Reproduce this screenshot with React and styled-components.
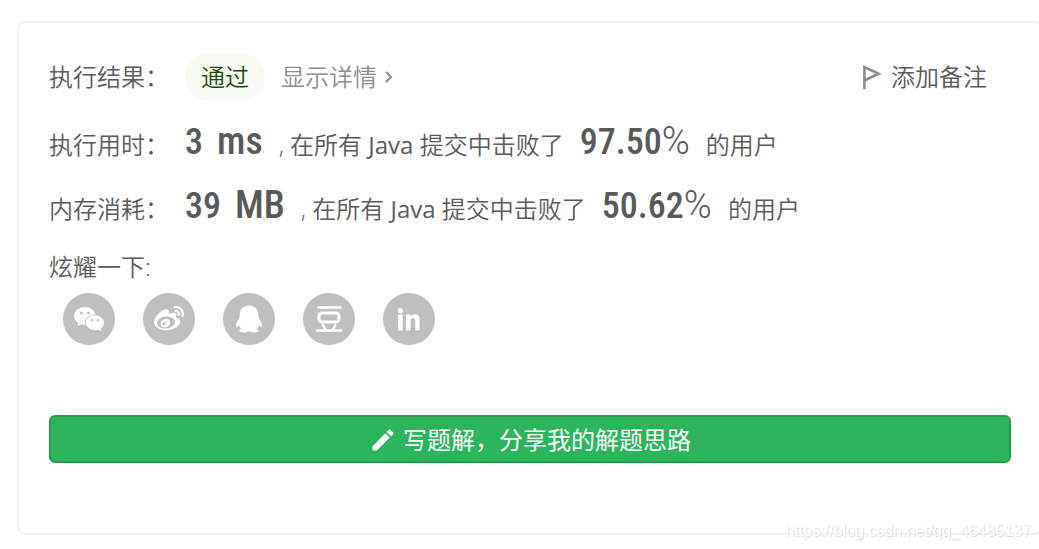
import React from 'react';
import styled, { createGlobalStyle } from 'styled-components';
import { AiFillWechat } from 'react-icons/ai';
import { FaWeibo } from 'react-icons/fa';
import { MdEdit } from 'react-icons/md';

const color = {
  text: '#595959',
  muted: '#8c8c8c',
  border: '#efefef',
  circle: '#bfbfbf',
  green: '#2db55d',
  greenBorder: '#269a4f',
  pass: '#1d4a0b',
  passBackground: '#f7fbf4',
};

const results = [
  { label: '执行用时：', amount: '3', unit: 'ms', percent: '97.50' },
  { label: '内存消耗：', amount: '39', unit: 'MB', percent: '50.62' },
];

const shares = [
  { name: '微信', icon: <AiFillWechat size={34} /> },
  { name: '微博', icon: <FaWeibo size={30} /> },
  { name: 'QQ', icon: <QqIcon /> },
  { name: '豆瓣', icon: <DoubanIcon /> },
  { name: 'LinkedIn', icon: <LinkedInIcon /> },
];

function QqIcon() {
  return (
    <svg width="28" height="28" viewBox="0 0 28 28" fill="currentColor">
      <path d="M14 .5C8.500.5 4.800 4.300 4.800 9.200c0 .8 0 1.400-.3 2.100-.3.600-.2 1.200-.2 1.900C2.300 16 1 18.500 1 20.600c0 1.200.3 1.700.7 1.700.7 0 1.600-1 2.300-2.300.4 1.600 1.200 3 2.400 4.100-1.300.4-2 1-2 1.700 0 1.200 1.900 1.700 4.300 1.700 2.300 0 4.100-.6 5.300-1.500 1.200.9 3 1.500 5.300 1.500 2.400 0 4.300-.5 4.300-1.700 0-.7-.7-1.300-2-1.700 1.200-1.100 2-2.500 2.400-4.100.7 1.300 1.600 2.300 2.300 2.300.4 0 .7-.5.700-1.700 0-2.100-1.300-4.600-3.300-7.400 0-.7.1-1.300-.2-1.900-.3-.7-.3-1.300-.3-2.100C23.200 4.300 19.500.5 14 .5z" />
    </svg>
  );
}

function DoubanIcon() {
  return (
    <svg width="28" height="28" viewBox="0 0 28 28" fill="none" stroke="currentColor" strokeLinecap="round">
      <path d="M3.500 2.500h22M2 25.500h24" strokeWidth="2.500" />
      <rect x="4" y="8" width="20" height="9" rx="3" strokeWidth="3" />
      <path d="M8 20l2.500 4.500M20.500 20L18 24.500" strokeWidth="2.500" />
    </svg>
  );
}

function LinkedInIcon() {
  return (
    <svg width="24" height="24" viewBox="0 0 24 24" fill="currentColor">
      <circle cx="3.400" cy="3.600" r="2.600" />
      <path d="M1.200 7.500h4.500v16H1.200zM9 7.500h4.300v2.200c.8-1.500 2.400-2.500 4.500-2.500 4 0 4.900 2.700 4.900 6.300v10h-4.500v-9.100c0-2.100-.4-3.400-2.200-3.400-1.900 0-2.500 1.400-2.500 3.400v9.100H9z" />
    </svg>
  );
}

function App() {
  return (
    <Page>
      <GlobalStyle />
      <Card>
        <Row>
          <Label>执行结果：</Label>
          <Status>通过</Status>
          <DetailLink href="#detail">
            显示详情
            <svg width="8" height="14" viewBox="0 0 8 14" fill="none" stroke="currentColor" strokeWidth="2">
              <path d="M1 2l5 5-5 5" />
            </svg>
          </DetailLink>
          <NoteButton type="button">
            <svg width="20" height="26" viewBox="0 0 20 26" fill="none" stroke={color.muted} strokeWidth="2.600">
              <path d="M1.400 25V3l14.200 6.800L1.400 16.500" />
            </svg>
            添加备注
          </NoteButton>
        </Row>
        <Results>
          {results.map(result => (
            <ResultRow key={result.label}>
              <Label>{result.label}</Label>
              <Value>{result.amount}<Unit>{result.unit}</Unit></Value>
              <span>, 在所有 <Language>Java</Language> 提交中击败了</span>
              <Value>{result.percent}<Percent>%</Percent></Value>
              <span>的用户</span>
            </ResultRow>
          ))}
        </Results>
        <ShareTitle>炫耀一下:</ShareTitle>
        <ShareList>
          {shares.map(share => (
            <ShareLink key={share.name} href="#share" aria-label={share.name}>
              {share.icon}
            </ShareLink>
          ))}
        </ShareList>
        <WriteButton type="button">
          <MdEdit size={28} />
          写题解，分享我的解题思路
        </WriteButton>
      </Card>
      <Watermark>https://blog.csdn.net/qq_46485137</Watermark>
    </Page>
  );
}

const GlobalStyle = createGlobalStyle`
  * {
    box-sizing: border-box;
  }
  body {
    margin: 0;
    overflow-x: hidden;
    background: white;
    color: ${color.text};
    font: 350 24px/36px "Open Sans", "Noto Sans CJK SC", sans-serif;
  }
`

const Page = styled.main`
  position: relative;
  padding: 21px 0 14px 17px;
`

const Card = styled.section`
  margin-right: -4px;
  padding: 30px;
  border: 2px solid ${color.border};
  border-radius: 8px;
`

const Row = styled.div`
  display: flex;
  align-items: center;
  gap: 16px;
  height: 48px;
  white-space: nowrap;
`

const Results = styled.div`
  padding-top: 8px;
`

const ResultRow = styled(Row)`
  align-items: baseline;
  height: 64px;
  line-height: 64px;
`

const Label = styled.span`
  width: 120px;
`

const Status = styled.strong`
  padding: 0 16px;
  border-radius: 24px;
  background: ${color.passBackground};
  color: ${color.pass};
  font-weight: 350;
  line-height: 48px;
`

const DetailLink = styled.a`
  display: flex;
  align-items: center;
  gap: 8px;
  color: ${color.muted};
  text-decoration: none;
`

const NoteButton = styled.button`
  display: flex;
  align-items: center;
  gap: 8px;
  margin-left: auto;
  padding: 0 24px;
  border: 0;
  background: none;
  color: inherit;
  font: inherit;
  cursor: pointer;
`

const Value = styled.strong`
  font-family: "Roboto Condensed", Roboto, sans-serif;
  font-size: 36px;
  font-weight: 500;
`

const Unit = styled.span`
  margin-left: 14px;
  font-size: 38px;
`

const Language = styled.span`
  font-weight: 400;
`

const Percent = styled.span`
  font-family: Roboto, sans-serif;
  font-size: 38px;
  font-weight: 300;
`

const ShareTitle = styled.div`
  margin-top: 12px;
`

const ShareList = styled.div`
  display: flex;
  gap: 28px;
  padding: 8px 14px 0;
`

const ShareLink = styled.a`
  display: flex;
  align-items: center;
  justify-content: center;
  width: 52px;
  height: 52px;
  border-radius: 50%;
  background: ${color.circle};
  color: white;
`

const WriteButton = styled.button`
  display: flex;
  align-items: center;
  justify-content: center;
  gap: 6px;
  width: 100%;
  height: 48px;
  margin: 70px 0 40px;
  padding: 2px 0 0;
  border: 2px solid ${color.greenBorder};
  border-radius: 6px;
  background: ${color.green};
  color: white;
  font: inherit;
  font-weight: 400;
  cursor: pointer;
`

const Watermark = styled.div`
  position: absolute;
  right: 8px;
  bottom: 8px;
  color: white;
  font: 16px/20px "Liberation Sans", Arial, sans-serif;
  text-shadow: 1px 1px 1px #d8d8d8;
`

export default App;
